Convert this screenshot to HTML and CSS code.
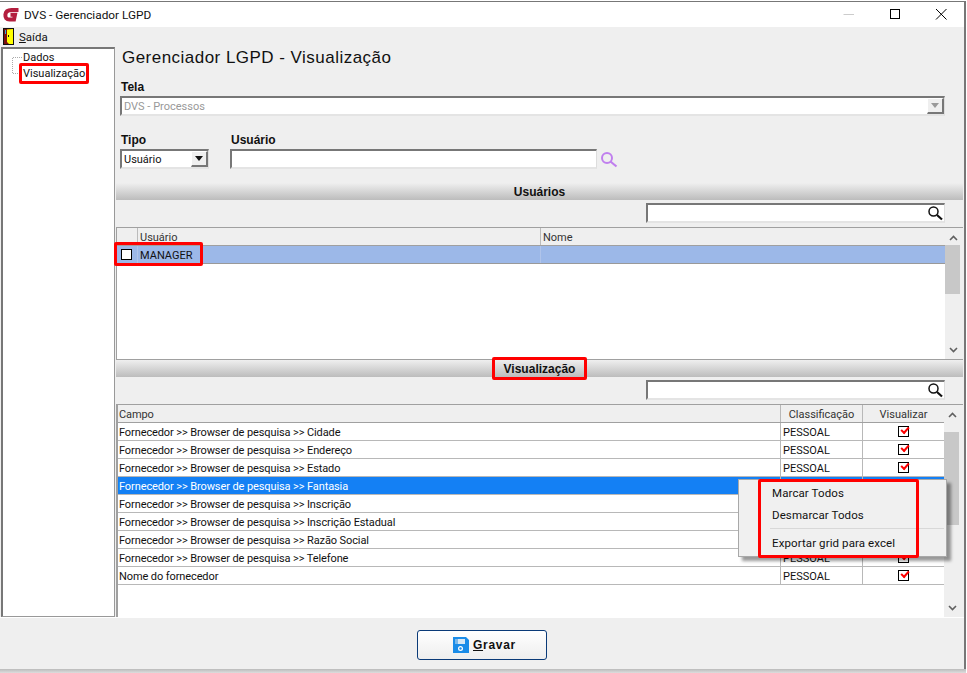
FILE: index.html
```html
<!DOCTYPE html>
<html lang="pt-BR">
<head>
<meta charset="utf-8">
<title>DVS - Gerenciador LGPD</title>
<link rel="stylesheet" href="styles.css">
</head>
<body>
<div class="screen">
  <div class="window">
    <header class="titlebar">
      <svg class="applogo" viewBox="0 0 17 15" width="17" height="15"><path d="M15.500 3H8.500Q3 3 2.400 7.500Q2 12.500 6.500 12.500H11L12 7.800H7.500" fill="none" stroke="#b31e3e" stroke-width="4"/></svg>
      <span class="apptitle">DVS - Gerenciador LGPD</span>
      <div class="winctrls">
        <svg class="ctl" viewBox="0 0 46 22" width="46" height="22"><path d="M17.500 10.500H28" stroke="#ccc" stroke-width="1"/></svg>
        <svg class="ctl" viewBox="0 0 46 22" width="46" height="22"><rect x="18.500" y="5.500" width="9" height="9" fill="none" stroke="#000"/></svg>
        <svg class="ctl" viewBox="0 0 46 22" width="46" height="22"><path d="M18 5L28.500 15.500M28.500 5L18 15.500" stroke="#000" fill="none"/></svg>
      </div>
    </header>
    <nav class="menubar">
      <svg class="exiticon" viewBox="0 0 11 17" width="11" height="17"><rect x=".5" y=".5" width="10" height="16" fill="#7a1010" stroke="#111"/><path d="M4 1.500L10 1V16H6L4 14Z" fill="#ffff00"/><rect x="2" y="2" width="1" height="4" fill="#3ad"/><rect x="5" y="7" width="1" height="2" fill="#111"/></svg>
      <span class="menuitem"><u>S</u>aída</span>
    </nav>
    <div class="body">
      <aside class="tree">
        <svg class="treelines" viewBox="0 0 14 30" width="14" height="30"><path d="M.5 .5H10M.5 .5V16.500H7" stroke="#aaa" fill="none" stroke-dasharray="1 1" shape-rendering="crispEdges"/></svg>
        <div class="treeitem">Dados</div>
        <div class="treeitem">Visualização</div>
      </aside>
      <main class="main">
        <h1 class="heading">Gerenciador LGPD - Visualização</h1>
        <div class="block telablock">
          <label class="lbl">Tela</label>
          <div class="field telafield">
            <span class="disabled">DVS - Processos</span>
            <span class="dropbtn off"><i class="tri"></i></span>
          </div>
        </div>
        <div class="block formrow">
          <div class="col">
            <label class="lbl">Tipo</label>
            <div class="field tipofield"><span>Usuário</span><span class="dropbtn"><i class="tri dark"></i></span></div>
          </div>
          <div class="col">
            <label class="lbl lbl-user">Usuário</label>
            <div class="userline">
              <div class="field userfield"></div>
              <svg class="search" viewBox="0 0 18 18" width="18" height="18"><circle cx="7" cy="7" r="5" fill="none" stroke="#c07fee" stroke-width="2"/><path d="M10.500 10.500L16.500 15.500" stroke="#c07fee" stroke-width="2.200"/></svg>
            </div>
          </div>
        </div>

        <div class="sectionbar first">Usuários</div>
        <div class="filterrow">
          <div class="field filter"><svg viewBox="0 0 16 16" width="16" height="16"><circle cx="6.500" cy="6.500" r="4.500" fill="none" stroke="#111" stroke-width="1.500"/><path d="M10 10L15 14.500" stroke="#111" stroke-width="2.200"/></svg></div>
        </div>
        <section class="grid usersgrid">
          <div class="gridcontent">
            <div class="grow ghead ucols"><div></div><div>Usuário</div><div>Nome</div></div>
            <div class="grow urow ucols"><div><i class="box"></i></div><div>MANAGER</div><div></div></div>
          </div>
          <div class="scroll">
            <svg class="arrow" viewBox="0 0 9 6" width="9" height="6"><path d="M1 5L4.500 1.500L8 5" fill="none" stroke="#606060" stroke-width="1.600"/></svg>
            <div class="track"><div class="thumb t1"></div></div>
            <svg class="arrow" viewBox="0 0 9 6" width="9" height="6"><path d="M1 1L4.500 4.500L8 1" fill="none" stroke="#606060" stroke-width="1.600"/></svg>
          </div>
        </section>

        <div class="sectionbar">Visualização</div>
        <div class="filterrow">
          <div class="field filter"><svg viewBox="0 0 16 16" width="16" height="16"><circle cx="6.500" cy="6.500" r="4.500" fill="none" stroke="#111" stroke-width="1.500"/><path d="M10 10L15 14.500" stroke="#111" stroke-width="2.200"/></svg></div>
        </div>
        <section class="grid fieldsgrid">
          <div class="gridcontent">
            <div class="grow ghead fcols"><div>Campo</div><div class="c">Classificação</div><div class="c">Visualizar</div></div>
            <div class="grow fcols"><div>Fornecedor &gt;&gt; Browser de pesquisa &gt;&gt; Cidade</div><div>PESSOAL</div><div class="c"><i class="check"></i></div></div>
            <div class="grow fcols"><div>Fornecedor &gt;&gt; Browser de pesquisa &gt;&gt; Endereço</div><div>PESSOAL</div><div class="c"><i class="check"></i></div></div>
            <div class="grow fcols"><div>Fornecedor &gt;&gt; Browser de pesquisa &gt;&gt; Estado</div><div>PESSOAL</div><div class="c"><i class="check"></i></div></div>
            <div class="grow fcols sel"><div>Fornecedor &gt;&gt; Browser de pesquisa &gt;&gt; Fantasia</div><div></div><div class="c"></div></div>
            <div class="grow fcols"><div>Fornecedor &gt;&gt; Browser de pesquisa &gt;&gt; Inscrição</div><div></div><div class="c"></div></div>
            <div class="grow fcols"><div>Fornecedor &gt;&gt; Browser de pesquisa &gt;&gt; Inscrição Estadual</div><div></div><div class="c"></div></div>
            <div class="grow fcols"><div>Fornecedor &gt;&gt; Browser de pesquisa &gt;&gt; Razão Social</div><div></div><div class="c"></div></div>
            <div class="grow fcols"><div>Fornecedor &gt;&gt; Browser de pesquisa &gt;&gt; Telefone</div><div>PESSOAL</div><div class="c"><i class="check"></i></div></div>
            <div class="grow fcols"><div>Nome do fornecedor</div><div>PESSOAL</div><div class="c"><i class="check"></i></div></div>
          </div>
          <div class="scroll">
            <svg class="arrow" viewBox="0 0 9 6" width="9" height="6"><path d="M1 5L4.500 1.500L8 5" fill="none" stroke="#606060" stroke-width="1.600"/></svg>
            <div class="track"><div class="thumb t2"></div></div>
            <svg class="arrow" viewBox="0 0 9 6" width="9" height="6"><path d="M1 1L4.500 4.500L8 1" fill="none" stroke="#606060" stroke-width="1.600"/></svg>
          </div>
        </section>
      </main>
    </div>
    <footer class="footer">
      <button class="save" type="button">
        <svg viewBox="0 0 16 16" width="16" height="16"><path d="M0 0H13L16 3V16H0Z" fill="#1a8ce8"/><rect x="2" y="2" width="10" height="5" fill="#d8e8f4"/><rect x="2" y="2" width="3" height="5" fill="#7ab8ea"/><circle cx="7.500" cy="11.500" r="2.500" fill="#fff"/><circle cx="7.500" cy="11.500" r="1.200" fill="#1a8ce8"/></svg>
        <span><u>G</u>ravar</span>
      </button>
    </footer>
    <div class="ctxmenu">
      <div class="ctxitem">Marcar Todos</div>
      <div class="ctxitem">Desmarcar Todos</div>
      <hr class="ctxsep">
      <div class="ctxitem">Exportar grid para excel</div>
    </div>
    <div class="mark m-tree"></div>
    <div class="mark m-user"></div>
    <div class="mark m-sec"></div>
    <div class="mark m-menu"></div>
  </div>
  <div class="under"></div>
</div>
</body>
</html>
```
FILE: styles.css
```css
* { box-sizing: border-box; }
html, body { margin: 0; padding: 0; background: #fff; }
body { width: 967px; height: 673px; overflow: hidden; font: 11px Roboto, "Liberation Sans", Arial, sans-serif; color: #000; }
.screen { width: 967px; height: 673px; padding-top: 1px; }
.window { position: relative; width: 966px; height: 668px; border-top: 1px solid #777; border-right: 2px solid #777; background: #efefef; display: flex; flex-direction: column; }
.under { height: 4px; width: 966px; background: linear-gradient(#bbb, #ddd); }

.titlebar { height: 25px; background: #fff; display: flex; align-items: center; padding-left: 3px; flex: none; }
.applogo { flex: none; }
.apptitle { margin-left: 4px; font-size: 11.800px; color: #111; }
.winctrls { margin-left: auto; display: flex; padding-right: 0; }
.ctl { display: block; }

.menubar { height: 20px; flex: none; display: flex; align-items: flex-start; padding: 1px 0 0 3px; }
.exiticon { flex: none; }
.menuitem { margin-left: 5px; font-size: 11.500px; line-height: 18px; color: #111; }

.body { height: 570px; flex: none; display: flex; }
.tree { position: relative; width: 114px; margin-left: 1px; background: #fff; border: 1px solid #999; border-top: 2px solid #777; border-left: 2px solid #777; padding: 1px 0 0 20px; flex: none; }
.treelines { position: absolute; left: 9px; top: 8px; }
.treeitem { height: 16px; line-height: 16px; font-size: 11px; color: #111; }

.main { margin-left: 1px; width: 847px; flex: none; display: flex; flex-direction: column; }
.main > * { flex: none; }
.heading { margin: 0; height: 21px; padding: 1px 0 0 6px; font: 400 17px/20px "Liberation Sans", Arial, sans-serif; letter-spacing: .47px; color: #111; }
.lbl { display: block; font: 700 12px/14px "Liberation Sans", Arial, sans-serif; color: #111; }
.block { padding-left: 4px; }
.telablock { margin-top: 11px; }
.telablock .lbl { height: 17px; padding-left: 1px; line-height: 16px; }
.field { display: flex; align-items: center; background: #fff; border: 2px solid #777; border-right: 1px solid #ddd; border-bottom: 2px solid #e4e4e4; height: 20px; }
.field > span:first-child { padding-top: 1px; }
.telafield { width: 825px; padding-left: 2px; font-size: 11px; }
.disabled { color: #999; }
.dropbtn { margin-left: auto; width: 17px; height: 16px; background: #efefef; border: 1px solid #fff; border-right: 2px solid #777; border-bottom: 2px solid #777; display: flex; align-items: center; justify-content: center; flex: none; }
.tri { width: 0; height: 0; border: 4px solid transparent; border-top: 5px solid #999; border-bottom: 0; }
.tri.dark { border-top-color: #111; }
.formrow { margin-top: 17px; display: flex; gap: 22px; }
.col .lbl { height: 16px; padding-left: 1px; }
.col .lbl-user { padding-left: 0; }
.tipofield { width: 89px; padding-left: 2px; font-size: 11px; color: #111; }
.userline { display: flex; align-items: center; gap: 3px; margin-left: -1px; }
.userfield { width: 367px; }
.search { flex: none; margin-top: 2px; }

.sectionbar { height: 17px; width: 847px; text-align: center; font: 700 12px/19px "Liberation Sans", Arial, sans-serif; background: linear-gradient(#efefef, #bcbcbc); color: #111; }
.sectionbar.first { margin-top: 14px; }
.filterrow { height: 27px; padding: 3px 0 0 530px; }
.filter { width: 299px; justify-content: flex-end; padding-right: 1px; }

.grid { display: flex; width: 847px; background: #fff; border-top: 1px solid #a0a0a0; border-left: 1px solid #a0a0a0; border-bottom: 1px solid #a0a0a0; }
.usersgrid { height: 133px; }
.fieldsgrid { height: 213px; border-left-width: 2px; border-bottom-width: 0; }
.gridcontent { width: 828px; flex: none; }
.fieldsgrid .gridcontent { width: 826px; }
.grow { display: grid; height: 18px; font-size: 11px; line-height: 19px; border-bottom: 1px solid #b8b8b8; color: #111; }
.grow > div { border-right: 1px solid #b8b8b8; padding-left: 2px; overflow: hidden; white-space: nowrap; height: 17px; }
.grow > .c { padding-left: 0; text-align: center; }
.fcols > div:first-child { padding-left: 1px; letter-spacing: -.1px; }
.ghead { background: #efefef; border-bottom: 1px solid #a0a0a0; color: #333; }
.ucols { grid-template-columns: 21px 403px 405px; }
.fcols { grid-template-columns: 663px 82px 82px; }
.usersgrid .gridcontent .ghead > div { border-right-color: #bbb; }
.urow { background: #9cb8e8; border-bottom: 1px solid #999; }
.urow > div { border-right-color: #b0c4ea; }
.sel { background: #1480f4; color: #fff; }
.box { display: block; width: 11px; height: 11px; margin: 3px 0 0 2px; background: #fff; border: 1px solid #000; }
.check { display: inline-block; width: 11px; height: 11px; margin-top: 3px; background: #fff; border: 1px solid #000; position: relative; vertical-align: top; }
.check::after { content: ""; position: absolute; left: 2px; top: 0; width: 6px; height: 3px; border-left: 2px solid #f00; border-bottom: 2px solid #f00; transform: rotate(-48deg); }

.scroll { flex: 1; min-width: 0; background: #efefef; display: flex; flex-direction: column; align-items: center; padding: 7px 2px 6px 0; }
.arrow { flex: none; display: block; }
.track { flex: 1; width: 100%; }
.thumb { background: #c8c8c8; width: 15px; }
.t1 { height: 49px; margin-top: 4px; }
.t2 { height: 93px; margin-top: 14px; }

.footer { flex: 1; display: flex; align-items: flex-start; padding: 12px 0 0 417px; border-top: 1px solid #fff; }
.save { width: 130px; height: 30px; padding: 0 0 0 35px; display: flex; align-items: center; gap: 4px; background: linear-gradient(#fff, #eee); border: 1px solid #0a3a78; border-radius: 3px; font: 700 12px "Liberation Sans", Arial, sans-serif; letter-spacing: .7px; color: #111; }

.ctxmenu { position: absolute; left: 738px; top: 477px; width: 209px; height: 78px; background: #f0f0f0; border: 1px solid #a8a8a8; box-shadow: 4px 4px 3px rgba(0,0,0,.4); padding: 3px 2px 0 33px; }
.ctxitem { height: 22px; line-height: 21px; font-size: 11.500px; letter-spacing: .1px; color: #111; }
.ctxsep { margin: 1px 0 4px -2px; border: 0; height: 1px; background: #d8d8d8; }

.mark { position: absolute; border: 3px solid #f00; border-radius: 2px; pointer-events: none; }
.m-tree { left: 19px; top: 61px; width: 70px; height: 21px; }
.m-user { left: 114px; top: 240px; width: 89px; height: 24px; }
.m-sec { left: 492px; top: 355px; width: 95px; height: 23px; }
.m-menu { left: 758px; top: 477px; width: 161px; height: 79px; }
```
